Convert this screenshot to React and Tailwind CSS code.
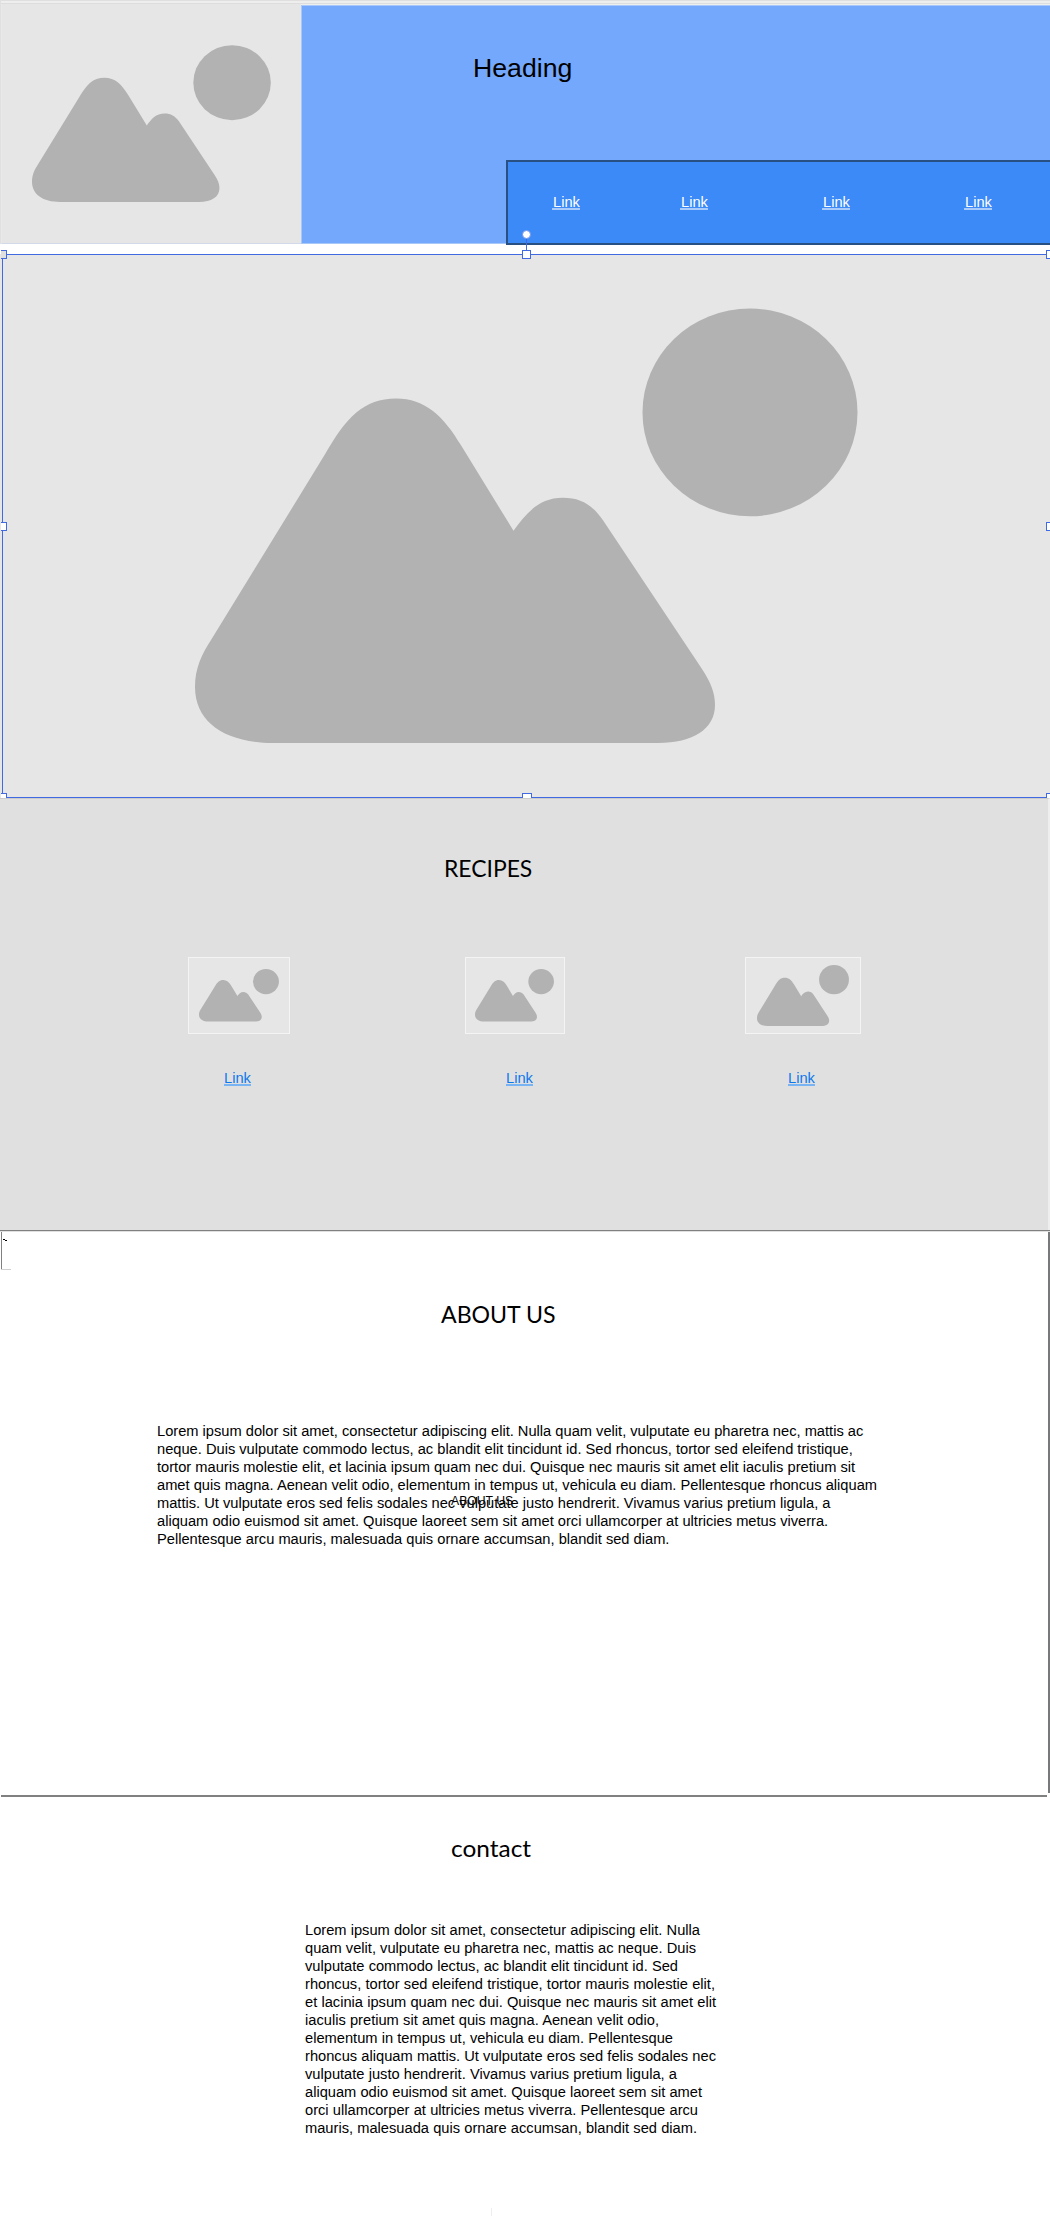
const ABOUT_LINES = [
  ["Lorem ipsum dolor sit amet, consectetur adipiscing elit. Nulla quam velit, vulputate eu pharetra nec, mattis ac", 706],
  ["neque. Duis vulputate commodo lectus, ac blandit elit tincidunt id. Sed rhoncus, tortor sed eleifend tristique,", 695],
  ["tortor mauris molestie elit, et lacinia ipsum quam nec dui. Quisque nec mauris sit amet elit iaculis pretium sit", 698],
  ["amet quis magna. Aenean velit odio, elementum in tempus ut, vehicula eu diam. Pellentesque rhoncus aliquam", 720],
  ["mattis. Ut vulputate eros sed felis sodales nec vulputate justo hendrerit. Vivamus varius pretium ligula, a", 673],
  ["aliquam odio euismod sit amet. Quisque laoreet sem sit amet orci ullamcorper at ultricies metus viverra.", 671],
  ["Pellentesque arcu mauris, malesuada quis ornare accumsan, blandit sed diam.", 511],
];

const CONTACT_LINES = [
  ["Lorem ipsum dolor sit amet, consectetur adipiscing elit. Nulla", 395],
  ["quam velit, vulputate eu pharetra nec, mattis ac neque. Duis", 391],
  ["vulputate commodo lectus, ac blandit elit tincidunt id. Sed", 373],
  ["rhoncus, tortor sed eleifend tristique, tortor mauris molestie elit,", 410],
  ["et lacinia ipsum quam nec dui. Quisque nec mauris sit amet elit", 411],
  ["iaculis pretium sit amet quis magna. Aenean velit odio,", 354],
  ["elementum in tempus ut, vehicula eu diam. Pellentesque", 368],
  ["rhoncus aliquam mattis. Ut vulputate eros sed felis sodales nec", 411],
  ["vulputate justo hendrerit. Vivamus varius pretium ligula, a", 372],
  ["aliquam odio euismod sit amet. Quisque laoreet sem sit amet", 397],
  ["orci ullamcorper at ultricies metus viverra. Pellentesque arcu", 393],
  ["mauris, malesuada quis ornare accumsan, blandit sed diam.", 392],
];

function Picture({ className }) {
  return (
    <svg viewBox="195 307.5 663 435.5" preserveAspectRatio="none" className={className} fill="#b2b2b2" aria-hidden="true">
      <ellipse cx="750" cy="412" rx="107.5" ry="104" />
      <path d="M273 743C225 743 195 722 195 687C195 668 202 654 211 640L325 454C346 417 364 398 396 398C425 398 444 416 461 445L513.500 530.500C526 513 539 497.500 563 497.500C580 497.500 592 504 603 520L702 669C711 683 715 693 715 705C715 729 693 743 658 743Z" />
    </svg>
  );
}

function Lines({ lines }) {
  return (
    <div className="text-[14.67px] leading-[18px] text-black">
      {lines.map(([text, width]) => (
        <p key={text} className="h-[18px] whitespace-nowrap" style={{ width, textAlignLast: "justify" }}>
          {text}
        </p>
      ))}
    </div>
  );
}

function Handle({ className }) {
  return <span className={`absolute border border-[#4169e1] ${className}`} />;
}

function NavLink({ className }) {
  return (
    <a className={`block w-7 border-b-2 border-[#a9cbfb] pl-px text-[14.67px] leading-[11px] text-white ${className}`}>Link</a>
  );
}

function Recipe({ frame, picture, link }) {
  return (
    <div className={frame}>
      <div className="h-[77px] border border-[#f4f4f4] bg-[#e6e6e6]">
        <Picture className={picture} />
      </div>
      <a className={`mt-[38px] block w-[27px] border-b-2 border-[#78b3f4] text-[14.67px] leading-[12px] text-[#0d78ee] ${link}`}>Link</a>
    </div>
  );
}

export default function App() {
  return (
    <div className="flex h-[2216px] w-[1050px] flex-col overflow-hidden bg-white font-['Liberation_Sans',Arial,sans-serif]">
      <header className="flex h-[244px] flex-col border-l border-[#e0e0e0] bg-white">
        <div className="h-[3px] shrink-0 border-t border-[#dfdfdf] bg-[#eeeeee]" />
        <div className="flex h-[241px] border-t border-[#dddddd]">
          <div className="h-[240px] w-[300px] shrink-0 border-b border-l border-b-[#d2daea] border-l-[#e9e9e9] bg-[#e6e6e6]">
            <Picture className="ml-[30px] mt-[41px] h-[157px] w-[239px]" />
          </div>
          <div className="flex grow flex-col border-t border-[#eeeeee]">
            <div className="flex h-[239px] flex-col border border-r-0 border-[#a9c8fa] bg-[#74a8fc]">
              <h1 className="ml-[171px] mt-[47px] h-[30px] text-[26.67px] leading-[30px] text-black">Heading</h1>
              <nav className="ml-[204px] mt-[77px] flex h-[85px] shrink-0 items-start border-2 border-r-0 border-[#285083] bg-[#3c89f8]">
                <NavLink className="ml-[44px] mt-[35px]" />
                <NavLink className="ml-[100px] mt-[35px]" />
                <NavLink className="ml-[114px] mt-[35px]" />
                <NavLink className="ml-[114px] mt-[35px]" />
              </nav>
            </div>
          </div>
        </div>
      </header>

      <section className="relative mt-[10px] h-[544px] shrink-0 bg-[#e6e6e6]">
        <div className="ml-[2px] h-[544px] border-y border-l border-[#4169e1]">
          <Picture className="ml-[192px] mt-[53px] h-[435px] w-[663px]" />
        </div>
        <Handle className="-top-1 left-px h-[9px] w-[6px] border-l-0 bg-[#e0e0e0]" />
        <Handle className="-top-1 left-[522px] size-[9px] bg-white" />
        <Handle className="-top-1 left-[1046px] h-[9px] w-1 border-r-0 bg-white" />
        <Handle className="left-px top-[268px] h-[9px] w-[6px] border-l-0 bg-white" />
        <Handle className="left-[1046px] top-[268px] h-[9px] w-1 border-r-0 bg-white" />
        <Handle className="left-px top-[539px] h-[5px] w-[6px] border-b-0 border-l-0 bg-white" />
        <Handle className="left-[522px] top-[539px] h-[5px] w-[10px] border-b-0 bg-white" />
        <Handle className="left-[1046px] top-[539px] h-[5px] w-1 border-b-0 border-r-0 bg-white" />
        <span className="absolute -top-[15px] left-[526px] h-[11px] w-px bg-[#4169e1]" />
        <span className="absolute -top-6 left-[522px] size-[9px] rounded-full border border-[#6e93ef] bg-white" />
      </section>

      <section className="h-[432px] shrink-0 border-r-2 border-t border-r-[#eeeeee] border-t-[#cccccc] bg-[#e0e0e0]">
        <h2 className="ml-[444px] mt-[54px] h-[30px] w-[110px] origin-left scale-x-[0.97] whitespace-nowrap font-['Lato',sans-serif] text-[23.6px] leading-[30px] text-black">RECIPES</h2>
        <div className="mt-[74px] flex pl-[188px]">
          <Recipe frame="w-[102px]" picture="ml-[10px] mt-[11px] h-[52.5px] w-[80px]" link="ml-9" />
          <Recipe frame="ml-[175px] w-[100px]" picture="ml-[9px] mt-[11px] h-[52.5px] w-[79px]" link="ml-[41px]" />
          <Recipe frame="ml-[180px] w-[116px]" picture="ml-[11px] mt-[7px] h-[61px] w-[92px]" link="ml-[43px]" />
        </div>
      </section>

      <section className="relative flex h-[567px] shrink-0 flex-col border-t border-[#808080]">
        <div className="h-px shrink-0 bg-[#e0e0e0]" />
        <div className="flex h-[561px] border-r-2 border-[#77797a]">
          <div className="ml-px h-[38px] w-[10px] shrink-0 bg-[linear-gradient(#808080,#808080)] bg-[length:1px_37px] bg-no-repeat">
            <div className="h-[38px] border-b border-[#d0d0d0]">
              <svg className="block h-[12px] w-[6px]" viewBox="0 0 6 12" shapeRendering="crispEdges" aria-hidden="true">
                <path d="M2 7H4V8H6V9H4V8H2Z" fill="#000" />
              </svg>
            </div>
          </div>
          <div className="ml-[146px]">
            <h2 className="ml-[284px] mt-[67px] h-[30px] w-[130px] origin-left scale-x-[0.98] whitespace-nowrap font-['Lato',sans-serif] text-[23.6px] leading-[30px] text-black">ABOUT US</h2>
            <div className="mt-[93px]">
              <Lines lines={ABOUT_LINES} />
            </div>
          </div>
        </div>
        <div className="ml-px mt-[2px] h-[2px] w-[1046px] shrink-0 self-start bg-[#808080]" />
        <span className="absolute left-[451px] top-[263px] whitespace-nowrap text-[12.2px] leading-[14px] text-black">ABOUT US</span>
      </section>

      <section className="flex grow flex-col">
        <h2 className="ml-[451px] mt-[36px] h-[30px] w-[90px] origin-left scale-x-[1.035] whitespace-nowrap font-['Lato',sans-serif] text-[23.6px] leading-[30px] text-black">contact</h2>
        <div className="ml-[305px] mt-[58px]">
          <Lines lines={CONTACT_LINES} />
        </div>
        <div className="ml-[491px] mt-auto h-2 w-px bg-[#eeeeee]" />
      </section>
    </div>
  );
}
